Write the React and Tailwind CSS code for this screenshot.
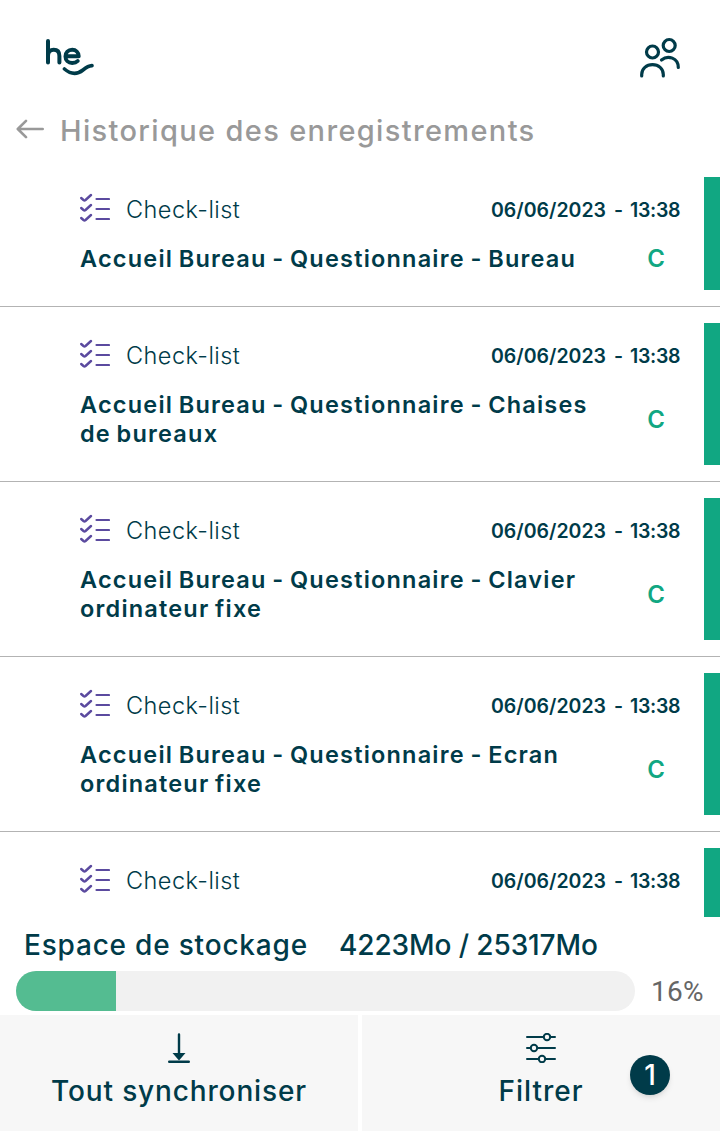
const records = [
  { id: 1, title: 'Accueil Bureau - Questionnaire - Bureau', date: '06/06/2023', time: '13:38' },
  { id: 2, title: 'Accueil Bureau - Questionnaire - Chaises\nde bureaux', date: '06/06/2023', time: '13:38' },
  { id: 3, title: 'Accueil Bureau - Questionnaire - Clavier\nordinateur fixe', date: '06/06/2023', time: '13:38' },
  { id: 4, title: 'Accueil Bureau - Questionnaire - Ecran\nordinateur fixe', date: '06/06/2023', time: '13:38' },
  { id: 5, date: '06/06/2023', time: '13:38' },
];

function Logo() {
  return (
    <svg width="50" height="42" viewBox="0 0 50 42" fill="none" stroke="#003b49" strokeWidth="4" strokeLinecap="round" strokeLinejoin="round">
      <path d="M3 5V26.500M3 20C3 16 5.500 13.800 8.700 13.800C12.200 13.800 14.400 16 14.400 20V26.500" />
      <path d="M21 20.300H33.700C33.700 16.500 30.800 13.800 27.200 13.800C23.200 13.800 20.500 16.700 20.500 20.400C20.500 24.300 23.300 27 27.200 27C29.600 27 31.300 26.500 32.700 25" />
      <path d="M19.500 33C26.500 39 33 38 38 34C41 31.500 43.500 29.800 47 29.600" strokeWidth="3.600" />
    </svg>
  );
}

function UsersIcon() {
  return (
    <svg width="42" height="42" viewBox="0 0 42 42" fill="none" stroke="#003b49" strokeWidth="3.200" strokeLinecap="round" className="mt-px">
      <circle cx="13.500" cy="15" r="6" />
      <circle cx="30.200" cy="8.500" r="6" />
      <path d="M2.700 39V37.500C2.700 31.500 7.500 27.700 13.500 27.700S24.300 31.500 24.300 37.500V39" />
      <path d="M22.500 23C29 17.500 39.300 21 39.300 30.500" />
    </svg>
  );
}

function ChecklistIcon() {
  return (
    <svg width="30" height="30" viewBox="0 0 30 30" fill="none" stroke="#5b4a9f" strokeWidth="2.400" strokeLinecap="round" strokeLinejoin="round" className="mb-1 shrink-0">
      <path d="M1.200 5L3.500 7Q4.500 7.800 5.500 7L11 2M1.200 15L3.500 17Q4.500 17.800 5.500 17L11 12M1.200 25L3.500 27Q4.500 27.800 5.500 27L11 22" />
      <path d="M16.500 6H29M16.500 16H29M16.500 26H29" strokeWidth="2.200" />
    </svg>
  );
}

function RecordRow({ title, date, time }) {
  return (
    <li className="flex min-h-[146px] shrink-0 border-b border-[#b3b3b3] py-4 pl-20">
      <div className="flex-1 pt-[18px] pb-[17px] pr-6">
        <div className="flex h-[29px] items-center">
          <ChecklistIcon />
          <span className="ml-4 flex-1 text-[23.500px] font-light tracking-[0.450px]">Check-list</span>
          <div className="flex gap-2 pt-0.5 text-[19.500px] font-semibold">
            <span className="w-[115px] whitespace-nowrap">{date}</span>
            <span className="w-2 text-center">-</span>
            <span className="w-[50px] tracking-[-0.300px] whitespace-nowrap">{time}</span>
          </div>
        </div>
        {title && (
          <div className="mt-5 flex items-center">
            <h2 className="flex-1 text-[23.500px] leading-[29px] font-semibold tracking-[1.200px] whitespace-pre [word-spacing:-1.500px]">{title}</h2>
            <span className="w-12 text-center text-[24px] leading-[29px] font-semibold text-[#11a782]">C</span>
          </div>
        )}
      </div>
      <div className="w-4 bg-[#11a782]" />
    </li>
  );
}

function StorageBar({ percent }) {
  return (
    <div className="flex h-10 items-center pl-4">
      <div className="h-10 w-[619px] overflow-hidden rounded-full bg-[#f1f1f1]">
        <div className="h-full bg-[#54bc91]" style={{ width: `${percent + 0.15}%` }} />
      </div>
      <span className="ml-4 pt-0.5 font-[Roboto,sans-serif] text-[28px] tracking-[0.300px] text-[#666]">{percent}%</span>
    </div>
  );
}

export default function App() {
  return (
    <div className="flex h-[1131px] w-[720px] flex-col overflow-hidden bg-white font-[Inter,sans-serif] text-[#003b49]">
      <header className="flex h-[105px] items-start justify-between pt-9 pr-[39px] pl-[45px]">
        <Logo />
        <UsersIcon />
      </header>

      <div className="flex h-14 items-start pl-4 text-[#999]">
        <svg width="28" height="20" viewBox="0 0 28 20" fill="none" stroke="currentColor" strokeWidth="2.600" strokeLinecap="round" strokeLinejoin="round" className="mt-[14px]">
          <path d="M26.700 10H2M10 1.800L1.800 10L10 18.200" />
        </svg>
        <h1 className="ml-4 text-[29px] leading-[52px] font-medium tracking-[1.350px] whitespace-nowrap">Historique des enregistrements</h1>
      </div>

      <ul className="flex h-[756px] flex-col overflow-hidden">
        {records.map((record) => (
          <RecordRow key={record.id} {...record} />
        ))}
      </ul>

      <section className="flex h-[98px] flex-col">
        <div className="flex h-[54px] items-center pt-0.5 pl-6 text-[28px] font-medium whitespace-nowrap">
          <span className="w-[315px] tracking-[0.800px]">Espace de stockage</span>
          <span className="tracking-[-0.100px]">4223Mo / 25317Mo</span>
        </div>
        <StorageBar percent={16} />
      </section>

      <nav className="flex h-[116px] gap-1 text-[28px] leading-[34px] font-medium">
        <button className="flex w-[358px] flex-col items-center bg-[#f7f7f7] pt-[18px]">
          <svg width="24" height="30" viewBox="0 0 24 30" fill="none" stroke="currentColor" strokeWidth="2.400" strokeLinecap="round">
            <path d="M12 1.500V22M2.200 28.700H21.800" />
            <path d="M5.500 20H18.500L12 27.500Z" fill="currentColor" stroke="none" />
          </svg>
          <span className="mt-[11px] tracking-[0.850px]">Tout synchroniser</span>
        </button>
        <button className="relative flex w-[358px] flex-col items-center bg-[#f7f7f7] pt-[18px]">
          <svg width="30" height="30" viewBox="0 0 30 30" fill="none" stroke="currentColor" strokeWidth="2" strokeLinecap="round">
            <path d="M1 4H17M25 4H29M1 15H4M12 15H29M1 26H12M20 26H29" />
            <circle cx="21" cy="4" r="3.200" />
            <circle cx="8" cy="15" r="3.200" />
            <circle cx="16" cy="26" r="3.200" />
          </svg>
          <span className="mt-[11px] tracking-[1px]">Filtrer</span>
          <span className="absolute top-10 left-[268px] flex size-10 items-center justify-center rounded-full bg-[#003b49] text-white shadow-md">1</span>
        </button>
      </nav>
    </div>
  );
}
